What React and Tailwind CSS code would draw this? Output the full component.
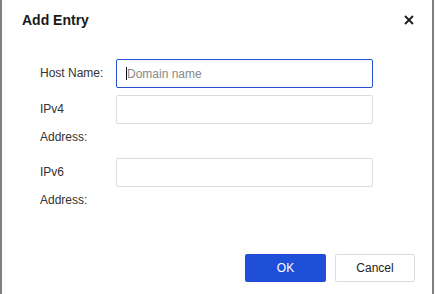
export default function App() {
  const rows = [
    { label: 'Host Name:', placeholder: 'Domain name', focused: true },
    { label: 'IPv4 Address:', placeholder: '' },
    { label: 'IPv6 Address:', placeholder: '' }
  ];

  return (
    <div className="h-[294px] w-[436px] bg-white" style={{ fontFamily: '"Liberation Sans", Arial, sans-serif' }}>
      <div className="flex h-full w-[434px] flex-col border-x-2 border-[#808080] bg-white">
        {/* Header */}
        <div className="flex items-center justify-between pl-[20px] pr-[18px] pt-[11px]">
          <h1 className="text-[14px] font-bold leading-[18px] text-[#1a1a1a]">Add Entry</h1>
          <svg className="h-[10px] w-[10px]" viewBox="0 0 10 10" fill="none" stroke="#1a1a1a" strokeWidth="1.8">
            <path d="M1 1l8 8M9 1l-8 8" />
          </svg>
        </div>

        {/* Form */}
        <div className="mt-[30px] flex flex-col gap-[7px] pl-[38px]">
          {rows.map((row) => (
            <div key={row.label} className="flex items-start">
              <div className="w-[70px] text-[12px] leading-[28px] text-[#333]">{row.label}</div>
              <div className="relative ml-[6px]">
                <input
                  className={
                    'h-[29px] w-[257px] rounded-[2px] border bg-white px-[10px] text-[12px] text-[#333] outline-none placeholder:text-[#888] ' +
                    (row.focused ? 'border-[#2451d6]' : 'border-[#dcdcdc]')
                  }
                  placeholder={row.placeholder}
                  readOnly
                />
                {row.focused && <span className="absolute left-[10px] top-[8px] h-[13px] w-px bg-[#111]" />}
              </div>
            </div>
          ))}
        </div>

        {/* Footer */}
        <div className="mt-auto flex justify-end gap-[9px] pb-[12px] pr-[17px]">
          <button className="h-[28px] w-[81px] rounded-[2px] bg-[#1f4fd8] text-[12px] text-white">OK</button>
          <button className="h-[28px] w-[80px] rounded-[2px] border border-[#dcdcdc] bg-white text-[12px] text-[#222]">
            Cancel
          </button>
        </div>
      </div>
    </div>
  );
}
